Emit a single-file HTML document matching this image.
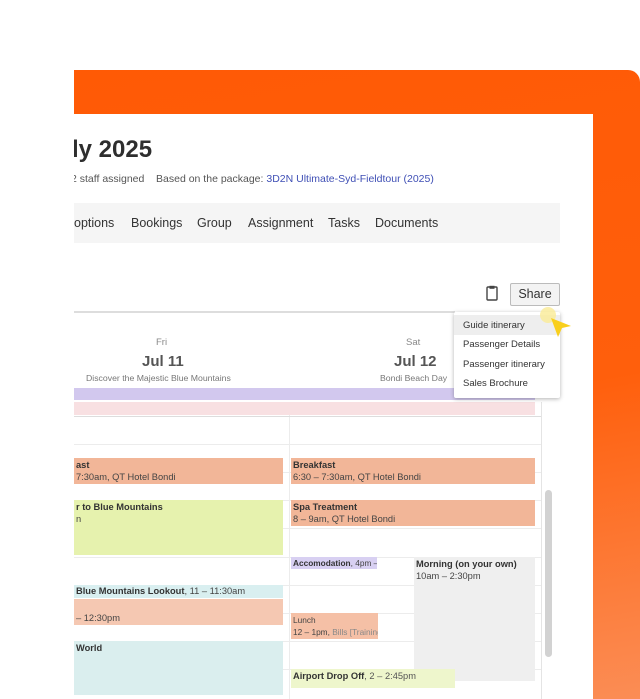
<!DOCTYPE html>
<html><head><meta charset="utf-8"><style>
*{margin:0;padding:0;box-sizing:border-box}
body{width:640px;height:699px;overflow:hidden;background:#fff;font-family:"Liberation Sans",Arial,sans-serif;position:relative;color:#333}
.orange{position:absolute;left:74px;top:70px;width:566px;height:629px;border-top-right-radius:12px;background:linear-gradient(170deg,#ff5a05 0%,#ff5f0c 55%,#fb8d55 100%)}
.panel{position:absolute;left:74px;top:114px;width:519px;height:585px;background:#fff;overflow:hidden}
.a{position:absolute;white-space:nowrap}
.ev{position:absolute;font-size:9.3px;line-height:12px;padding:1px 2px;color:#444;white-space:nowrap;overflow:hidden}
.ev b{color:#333}
.hl{position:absolute;left:0;width:467px;height:1px;background:#ececec}
</style></head><body>
<div class="orange"></div>
<div class="panel">
 <div class="a" style="left:-2px;top:22px;font-size:24px;color:#2e2e2e;font-weight:bold">ly 2025</div>
 <div class="a" style="left:-3px;top:59px;font-size:10.5px;color:#555">2 staff assigned &nbsp;&nbsp;&nbsp;Based on the package: <span style="color:#3f4fb5">3D2N Ultimate-Syd-Fieldtour (2025)</span></div>
 <div class="a" style="left:0;top:89px;width:486px;height:40px;background:#f5f5f5"></div>
 <div class="a" style="left:0;top:102px;font-size:12.5px;color:#333">options</div>
 <div class="a" style="left:57px;top:102px;font-size:12.5px">Bookings</div>
 <div class="a" style="left:123px;top:102px;font-size:12.5px">Group</div>
 <div class="a" style="left:174px;top:102px;font-size:12.5px">Assignment</div>
 <div class="a" style="left:254px;top:102px;font-size:12.5px">Tasks</div>
 <div class="a" style="left:301px;top:102px;font-size:12.5px">Documents</div>
 <svg class="a" style="left:412px;top:171px" width="12" height="16" viewBox="0 0 12 16"><rect x="1" y="2" width="10" height="13" rx="1" fill="none" stroke="#444" stroke-width="1.4"/><rect x="3.5" y="0.8" width="5" height="3" fill="#444"/></svg>
 <div class="a" style="left:436px;top:169px;width:50px;height:23px;border:1px solid #bbb;border-radius:2px;background:#f3f3f3;font-size:12.5px;text-align:center;line-height:21px">Share</div>
 <div class="a" style="left:0;top:197px;width:381px;height:2px;background:#ddd"></div>
 <div class="a" style="left:82px;top:223px;font-size:9.5px;color:#888">Fri</div>
 <div class="a" style="left:68px;top:239px;font-size:15px;color:#555;font-weight:bold">Jul 11</div>
 <div class="a" style="left:12px;top:259px;font-size:8.7px;color:#777">Discover the Majestic Blue Mountains</div>
 <div class="a" style="left:332px;top:223px;font-size:9.5px;color:#888">Sat</div>
 <div class="a" style="left:320px;top:239px;font-size:15px;color:#555;font-weight:bold">Jul 12</div>
 <div class="a" style="left:306px;top:259px;font-size:8.7px;color:#777">Bondi Beach Day</div>
 <div class="a" style="left:0;top:274px;width:461px;height:12px;background:#d2c8ee"></div>
 <div class="a" style="left:0;top:288px;width:461px;height:13px;background:#f8e0e2"></div>
 <div class="a" style="left:215px;top:301px;width:1px;height:290px;background:#ececec"></div>
 <div class="a" style="left:467px;top:288px;width:1px;height:300px;background:#e4e4e4"></div>
 <div class="a" style="left:471px;top:376px;width:7px;height:167px;border-radius:4px;background:#d2d2d2"></div>
 <div class="hl" style="top:302px;background:#ddd"></div>
 <div class="hl" style="top:330px"></div><div class="hl" style="top:358px"></div><div class="hl" style="top:386px"></div>
 <div class="hl" style="top:414px"></div><div class="hl" style="top:443px"></div><div class="hl" style="top:471px"></div>
 <div class="hl" style="top:499px"></div><div class="hl" style="top:527px"></div><div class="hl" style="top:555px"></div>
 <div class="ev" style="left:0;top:344px;width:209px;height:26px;background:#f2b698"><b>ast</b><br>7:30am, QT Hotel Bondi</div>
 <div class="ev" style="left:217px;top:344px;width:244px;height:26px;background:#f2b698"><b>Breakfast</b><br>6:30 – 7:30am, QT Hotel Bondi</div>
 <div class="ev" style="left:0;top:386px;width:209px;height:55px;background:#e6f2ae"><b>r to Blue Mountains</b><br>n</div>
 <div class="ev" style="left:217px;top:386px;width:244px;height:26px;background:#f2b698"><b>Spa Treatment</b><br>8 – 9am, QT Hotel Bondi</div>
 <div class="ev" style="left:217px;top:443px;width:86px;height:12px;padding-top:0;font-size:8.3px;background:#d8d0f2"><b>Accomodation</b>, 4pm – 10am,</div>
 <div class="ev" style="left:340px;top:443px;width:121px;height:124px;background:#efefef"><b>Morning (on your own)</b><br>10am – 2:30pm</div>
 <div class="ev" style="left:0;top:471px;width:209px;height:13px;padding-top:0;background:#d9eff0"><b>Blue Mountains Lookout</b>, 11 – 11:30am</div>
 <div class="ev" style="left:0;top:485px;width:209px;height:26px;background:#f5c8b2"><br>– 12:30pm</div>
 <div class="ev" style="left:217px;top:499px;width:87px;height:26px;font-size:8.3px;background:#f5c0a6">Lunch<br>12 – 1pm, <span style="color:#888">Bills [Training Data]</span></div>
 <div class="ev" style="left:0;top:527px;width:209px;height:54px;background:#daeeee"><b>World</b></div>
 <div class="ev" style="left:217px;top:555px;width:164px;height:19px;background:#eef6cc;color:#555"><b>Airport Drop Off</b>, 2 – 2:45pm</div>
</div>
<div class="a" style="left:454px;top:312px;width:106px;height:86px;background:#fff;box-shadow:0 1px 4px rgba(0,0,0,.3);border-radius:2px;font-size:9.5px;color:#333">
 <div style="background:#eee;height:20px;margin-top:3px;padding:5px 9px">Guide itinerary</div>
 <div style="height:20px;padding:4px 9px">Passenger Details</div>
 <div style="height:20px;padding:4px 9px">Passenger itinerary</div>
 <div style="height:20px;padding:3px 9px">Sales Brochure</div>
</div>
<div class="a" style="left:540px;top:307px;width:16px;height:16px;border-radius:50%;background:rgba(250,235,150,.8)"></div>
<svg class="a" style="left:548px;top:316px" width="26" height="24" viewBox="0 0 26 24"><path d="M3 2 L23 10 L14 12 L10 21 Z" fill="#f9cf1c"/></svg>
</body></html>
